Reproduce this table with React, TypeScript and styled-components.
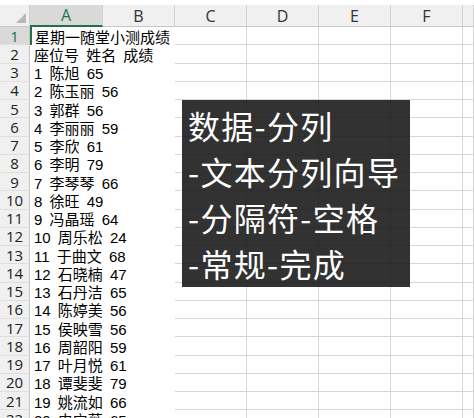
import React from "react";
import styled, { createGlobalStyle } from "styled-components";

const Global = createGlobalStyle`
  html, body { margin: 0; padding: 0; background: #fff; overflow: hidden; }
  body { width: 474px; height: 418px; }
`;

const GREEN = "#217346";
const ROW_H = 18.25;

const Sheet = styled.div`
  position: relative;
  width: 474px;
  height: 418px;
  overflow: hidden;
  padding-top: 5px;
  box-sizing: border-box;
  font-family: "Liberation Sans", "Noto Sans CJK SC", sans-serif;
`;

const Grid = styled.div`
  display: grid;
  grid-template-columns: 30px 73px 72px 72px 72px 72px 72px 1fr;
  grid-template-rows: 22px;
  grid-auto-rows: ${ROW_H}px;
`;

const Corner = styled.div`
  position: relative;
  background: #f0f0f0;
  border-right: 1px solid #d0d0d0;
  border-bottom: 1px solid #c8c8c8;
  box-sizing: border-box;
  &::after {
    content: "";
    position: absolute;
    right: 3px;
    bottom: 3px;
    width: 0;
    height: 0;
    border-left: 10px solid transparent;
    border-bottom: 10px solid #b8b8b8;
  }
`;

const ColHead = styled.div<{ $sel?: boolean }>`
  display: flex;
  align-items: center;
  justify-content: center;
  background: ${(p) => (p.$sel ? "#d9d9d9" : "#f0f0f0")};
  color: ${(p) => (p.$sel ? GREEN : "#333")};
  border-right: 1px solid #d2d2d2;
  border-bottom: ${(p) => (p.$sel ? `2px solid ${GREEN}` : "1px solid #c8c8c8")};
  box-sizing: border-box;
  font-family: "Open Sans", "Liberation Sans", sans-serif;
  font-size: 16px;
`;

const RowHead = styled.div<{ $sel?: boolean }>`
  display: flex;
  align-items: center;
  justify-content: center;
  background: ${(p) => (p.$sel ? "#d9d9d9" : "#f0f0f0")};
  color: ${(p) => (p.$sel ? GREEN : "#222")};
  border-right: 1px solid #c4c4c4;
  border-bottom: 1px solid #dedede;
  box-sizing: border-box;
  font-family: "Open Sans", "Liberation Sans", sans-serif;
  font-size: 15px;
`;

const TextCell = styled.div<{ $sel?: boolean }>`
  grid-column: span 2;
  display: flex;
  align-items: center;
  padding-left: ${(p) => (p.$sel ? "3px" : "4px")};
  border-left: ${(p) => (p.$sel ? `2px solid ${GREEN}` : "none")};
  box-sizing: border-box;
  overflow: hidden;
  white-space: nowrap;
  font-size: 15px;
  word-spacing: 3px;
  color: #000;
`;

const Cell = styled.div`
  border-right: 1px solid #d6d6d6;
  border-bottom: 1px solid #d6d6d6;
  box-sizing: border-box;
`;

const Note = styled.div`
  position: absolute;
  left: 182px;
  top: 100px;
  width: 228px;
  height: 187px;
  box-sizing: border-box;
  padding: 2px 0 0 6px;
  background: rgba(22, 22, 22, 0.88);
  color: #fff;
  font-family: "Noto Sans CJK SC", sans-serif;
  font-size: 32px;
  line-height: 46px;
  letter-spacing: 1.3px;
  white-space: nowrap;
`;

const NoteLine = styled.div``;

const rows: string[] = [
  "星期一随堂小测成绩",
  "座位号 姓名 成绩",
  "1 陈旭 65",
  "2 陈玉丽 56",
  "3 郭群 56",
  "4 李丽丽 59",
  "5 李欣 61",
  "6 李明 79",
  "7 李琴琴 66",
  "8 徐旺 49",
  "9 冯晶瑶 64",
  "10 周乐松 24",
  "11 于曲文 68",
  "12 石晓楠 47",
  "13 石丹洁 65",
  "14 陈婷美 56",
  "15 侯映雪 56",
  "16 周韶阳 59",
  "17 叶月悦 61",
  "18 谭斐斐 79",
  "19 姚流如 66",
  "20 史宁薇 65",
];

const cols = ["A", "B", "C", "D", "E", "F", ""];

export default function App() {
  return (
    <>
      <Global />
      <Sheet>
        <Grid>
          <Corner />
          {cols.map((c, i) => (
            <ColHead key={i} $sel={c === "A"}>
              {c}
            </ColHead>
          ))}
          {rows.map((t, i) => (
            <React.Fragment key={i}>
              <RowHead $sel={i === 0}>{i + 1}</RowHead>
              <TextCell $sel={i === 0}>{t}</TextCell>
              <Cell />
              <Cell />
              <Cell />
              <Cell />
              <Cell />
            </React.Fragment>
          ))}
        </Grid>
        <Note>
          <NoteLine>数据-分列</NoteLine>
          <NoteLine>-文本分列向导</NoteLine>
          <NoteLine>-分隔符-空格</NoteLine>
          <NoteLine>-常规-完成</NoteLine>
        </Note>
      </Sheet>
    </>
  );
}
